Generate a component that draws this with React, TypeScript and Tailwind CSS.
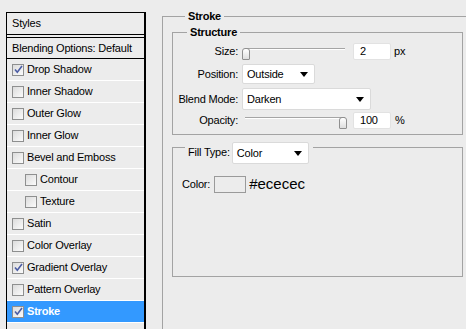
import React from 'react';

const font = { fontFamily: '"Liberation Sans", Arial, sans-serif' };

const styleItems = [
  { label: 'Drop Shadow', checked: true },
  { label: 'Inner Shadow' },
  { label: 'Outer Glow' },
  { label: 'Inner Glow' },
  { label: 'Bevel and Emboss' },
  { label: 'Contour', indent: true },
  { label: 'Texture', indent: true },
  { label: 'Satin' },
  { label: 'Color Overlay' },
  { label: 'Gradient Overlay', checked: true },
  { label: 'Pattern Overlay' },
  { label: 'Stroke', checked: true, active: true },
];

function CheckBox({ checked }: { checked?: boolean }) {
  return (
    <div className="w-[12px] h-[12px] shrink-0 border border-[#8e8f8f] bg-gradient-to-br from-[#dcdcdc] to-[#fbfbfb] flex items-center justify-center">
      {checked && (
        <svg width="9" height="9" viewBox="0 0 9 9">
          <path d="M1 4.5 L3.3 7.2 L8 1" fill="none" stroke="#4b5ca4" strokeWidth="1.6" />
        </svg>
      )}
    </div>
  );
}

function Slider({ pos }: { pos: number }) {
  return (
    <div className="relative w-[104px] h-[13px]">
      <div className="mt-[6px] ml-[3px] w-[100px] h-[2px] border-t border-[#a5a5a5] bg-white" />
      <div
        className="absolute top-0 w-[8px] h-[12px] rounded-t-[3px] rounded-b-[1px] border border-[#8f8f8f] bg-gradient-to-b from-white to-[#dedede]"
        style={{ left: pos }}
      />
    </div>
  );
}

function Select({ value, width, height }: { value: string; width: string; height: string }) {
  return (
    <div className={`${width} ${height} bg-white border border-[#dadada] rounded-[2px] flex items-center justify-between pl-[4px] pr-[6px] text-[11px] text-black`}>
      <span>{value}</span>
      <svg width="8" height="5" viewBox="0 0 8 5">
        <path d="M0 0 H8 L4 5 Z" fill="#000" />
      </svg>
    </div>
  );
}

function NumberBox({ value }: { value: string }) {
  return (
    <div className="w-[38px] h-[17px] bg-white border border-[#e2e2e2] rounded-[2px] pl-[6px] text-[11px] leading-[15px] text-black">
      {value}
    </div>
  );
}

export default function App() {
  return (
    <div className="w-[466px] h-[329px] overflow-hidden bg-[#ececec] flex text-black tracking-[-0.2px]" style={font}>
      {/* styles list */}
      <div className="ml-[6px] mt-[12px] w-[140px] shrink-0 border-l border-t border-r-2 border-black flex flex-col text-[11px]">
        <div className="h-[22px] border-b border-black flex items-center pl-[5px]">Styles</div>
        <div className="h-[22px] mt-[2px] border-t border-b border-black flex items-center pl-[5px]">
          Blending Options: Default
        </div>
        {styleItems.map((item, i) => (
          <div
            key={i}
            className={`h-[22px] shrink-0 border-b border-white flex items-center gap-[2px] ${item.indent ? 'pl-[18px]' : 'pl-[5px]'} ${item.active ? 'bg-[#3399ff] text-white font-bold' : ''}`}
          >
            <CheckBox checked={item.checked} />
            <span className="ml-[1px]">{item.label}</span>
          </div>
        ))}
      </div>

      {/* stroke settings */}
      <fieldset className="ml-[16px] mt-[10px] w-[330px] h-[340px] shrink-0 border border-[#a3a3a3] pl-[9px]">
        <legend className="ml-[13px] px-[3px] text-[11px] font-bold leading-[12px]">Stroke</legend>

        <fieldset className="mt-[4px] w-[291px] border border-[#a3a3a3] pb-[5px] text-[11px]">
          <legend className="ml-[14px] px-[3px] font-bold leading-[12px]">Structure</legend>

          <div className="mt-[5px] flex items-center h-[17px]">
            <div className="w-[65px] text-right">Size:</div>
            <div className="ml-[4px]"><Slider pos={0} /></div>
            <div className="ml-[7px]"><NumberBox value="2" /></div>
            <span className="ml-[3px]">px</span>
          </div>

          <div className="mt-[4px] flex items-center">
            <div className="w-[65px] text-right">Position:</div>
            <div className="ml-[4px]"><Select value="Outside" width="w-[73px]" height="h-[20px]" /></div>
          </div>

          <div className="mt-[4px] flex items-center">
            <div className="w-[65px] text-right">Blend Mode:</div>
            <div className="ml-[4px]"><Select value="Darken" width="w-[129px]" height="h-[22px]" /></div>
          </div>

          <div className="mt-[2px] flex items-center h-[17px]">
            <div className="w-[65px] text-right">Opacity:</div>
            <div className="ml-[4px]"><Slider pos={97} /></div>
            <div className="ml-[7px]"><NumberBox value="100" /></div>
            <span className="ml-[4px]">%</span>
          </div>
        </fieldset>

        <fieldset className="mt-[7px] w-[291px] border border-[#a3a3a3] pb-[80px] text-[11px]">
          <legend className="ml-[12px] h-[10px] pl-[3px] pr-[4px]">
            <div className="flex items-start">
              <span className="mt-[2px]">Fill Type:</span>
              <div className="ml-[2px]"><Select value="Color" width="w-[77px]" height="h-[22px]" /></div>
            </div>
          </legend>

          <div className="mt-[21px] ml-[9px] flex items-center">
            <span>Color:</span>
            <div className="ml-[4px] w-[32px] h-[17px] border border-[#9a9a9a] bg-[#ececec]" />
            <span className="ml-[3px] text-[15px] tracking-normal">#ececec</span>
          </div>
        </fieldset>
      </fieldset>
    </div>
  );
}
